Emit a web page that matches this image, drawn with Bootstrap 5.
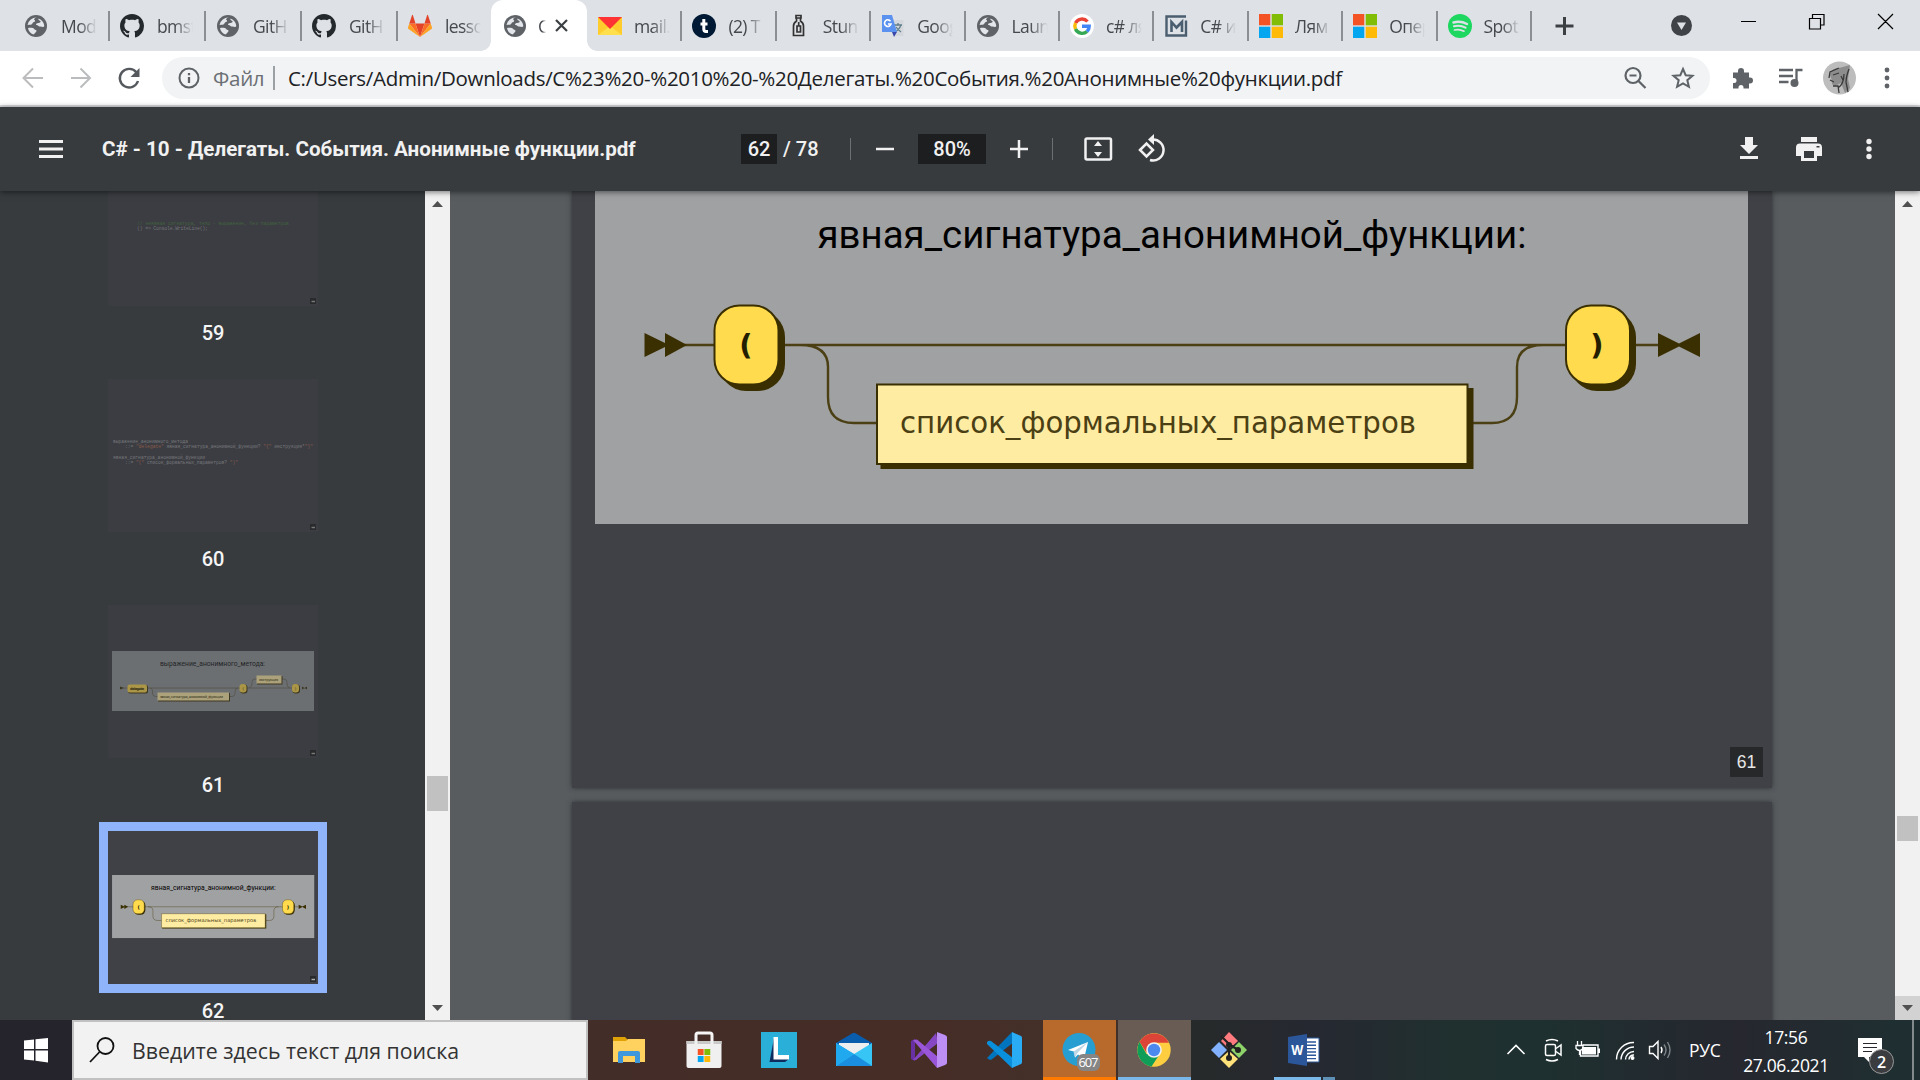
<!DOCTYPE html>
<html lang="ru">
<head>
<meta charset="utf-8">
<title>C# - 10 - Делегаты. События. Анонимные функции.pdf</title>
<link href="https://cdn.jsdelivr.net/npm/bootstrap@5.3.0/dist/css/bootstrap.min.css" rel="stylesheet">
<style>
body{width:1920px;height:1080px;overflow:hidden;font-family:"Open Sans","Noto Sans",sans-serif;color:#202124;line-height:1}
svg{display:block;overflow:visible}
.strip{height:51px;background:#dee1e6;padding-left:13px}
.tab{width:96px;height:51px;padding-left:11px;flex:none}
.tab.late{width:94.4px;padding-left:11px}
.fav{width:24px;height:24px;flex:none;margin-right:13px}
.late .fav{margin-right:12px}
.fav svg{width:24px;height:24px}
.tt{width:36px;overflow:hidden;white-space:nowrap;font-size:17.5px;line-height:26px;letter-spacing:-.6px;color:#45494d;-webkit-mask-image:linear-gradient(90deg,#000 50%,transparent);mask-image:linear-gradient(90deg,#000 50%,transparent)}
.tsep{width:2px;height:30px;background:#8b8e93;margin-left:auto;margin-right:-1px}
.tab.cur{background:#fff;border-radius:12px 12px 0 0;width:96px;margin-left:-2px;padding-left:12px;position:relative}
.cur .fav{margin-right:11px}
.cur .tt{width:8px}
.cur::before,.cur::after{content:"";position:absolute;bottom:0;width:10px;height:10px}
.cur::before{left:-10px;background:radial-gradient(circle at 0 0,transparent 9.5px,#fff 10px)}
.cur::after{right:-10px;background:radial-gradient(circle at 100% 0,transparent 9.5px,#fff 10px)}
.addr{height:56px;background:#fff;border-bottom:2px solid #dadce0;display:grid;grid-template-columns:57px 48px 57px 1548px 67px 48px 47px auto}
.pill{height:42px;border-radius:21px;background:#f1f3f4;padding-left:15px}
.url{font-size:20.5px;line-height:30px;white-space:nowrap;letter-spacing:-.3px}
.pdfbar{height:84px;background:#373b3e;color:#f1f1f1;font-family:Roboto,sans-serif;font-weight:500;font-size:20px;position:relative;z-index:3;box-shadow:0 1px 6px rgba(0,0,0,.55);display:grid;grid-template-columns:102px 639px 36px 73px 2px 66px 68px 66px 2px 60px 54px 560px 61px 60px auto}
.p-title{font-weight:700;font-size:20.6px}
.box{background:#1d1e20;height:30px;line-height:30px;text-align:center}
.vsep{height:22px;width:1px;background:#6d7072}
.work{height:829px;background:#585c5f}
.side{width:425px;background:#373b3e;overflow:hidden}
.side-in{margin-top:-38px;padding-left:108px}
.item{width:210px;height:226px}
.thumb{width:210px;height:153px;background:#3c3d42;overflow:hidden}
.item.on .thumb{background:#3f4146;outline:9px solid #8fb4f9;overflow:visible}
.num{font:500 20px/24px Roboto,sans-serif;color:#f5f5f5;text-align:center;padding-top:15px}
.sb{width:25px;background:#f1f1f1;flex:none}
.sbb{height:25px}
.knob{width:21px;background:#c1c1c1;margin:0 auto}
.view{width:1445px;overflow:hidden;padding-left:122px}
.sheet{width:1200px;background:#3f4146;box-shadow:0 0 5px 0 #303335}
.pg{width:33px;height:30px;background:#27282a;color:#e6e6e6;font:17.5px/30px "Liberation Sans",sans-serif;text-align:center}
.task{height:60px;color:#fff;background:linear-gradient(90deg,#25242d 0,#25242d 80px,#432d28 590px,#462d26 900px,#43302a 1110px,#272a2a 1195px,#262831 1310px,#20302f 1450px,#1e3030 1540px,#26272f 1740px,#1f2f31 1900px)}
.find{width:516px;height:60px;background:#f2f2f2;border:2px solid #c1c1c1;color:#333;padding-left:15px}
.find span{font-size:21.3px;line-height:30px;white-space:nowrap;padding-top:2px}
.app{width:75px;height:60px;flex:none;position:relative;padding:0 1px}
.app svg{width:36px;height:36px;margin:12px auto 0}
.app.att::before,.app.act::before{content:"";position:absolute;inset:0 1px;background:#b8692c}
.app.act::before{background:#685c55}
.app.att svg,.app.act svg{position:relative}
.bar{position:absolute;left:1px;right:1px;bottom:0;height:3px;background:#ff7a00}
.bar.blue{background:#7ab8ea}
.tray{width:413px;display:grid;grid-template-columns:38px 31px 39px 33px 41px 52px 90px auto}
.clock{font-size:17.5px;line-height:28px;text-align:center;letter-spacing:-.35px}
</style>
</head>
<body>
<svg width="0" height="0" class="position-absolute">
<defs>
<symbol id="globe" viewBox="0 0 24 24"><circle cx="12" cy="12" r="11" fill="#5f6368"/><path d="M13 3.5c-3 .5-3.500 2-2 3 .6 1-1 1.500-2 2-.8 1.500-1.500 2.500-4 2.300L3.500 11A9 9 0 0 1 13 3.500zM14.500 4.500c3.500 1.500 5.500 4 5.800 7.500-1 2-2.500.5-4 .5-2.500 0-1.800-1.500-4-1.500-1-1 .5-2 2-2 1.800-.3 3-1 2-2s-2.500-1-1.800-2.500zM4 14c2.500-.5 5-.5 6 .8.500 1.200 3 1 2.500 2.500-1 1.200-1.500 2.200-3.200 3.200C6.500 19.500 4.500 17 4 14z" fill="#e3e6ea"/></symbol>
<symbol id="gh" viewBox="0 0 16 16"><path fill="#24292e" d="M8 0C3.580 0 0 3.580 0 8c0 3.540 2.290 6.530 5.470 7.590.4.070.55-.17.55-.38 0-.19-.01-.82-.01-1.490-2.010.37-2.530-.49-2.690-.94-.09-.23-.48-.94-.82-1.130-.28-.15-.68-.52-.01-.53.63-.01 1.080.58 1.230.82.720 1.210 1.870.87 2.330.66.070-.52.28-.87.510-1.070-1.780-.2-3.640-.89-3.640-3.950 0-.87.31-1.590.82-2.150-.08-.2-.36-1.020.08-2.120 0 0 .67-.21 2.200.82.64-.18 1.320-.27 2-.27s1.360.09 2 .27c1.530-1.040 2.200-.82 2.200-.82.44 1.100.16 1.920.08 2.120.51.560.82 1.270.82 2.150 0 3.070-1.870 3.750-3.650 3.950.29.25.54.730.54 1.480 0 1.070-.01 1.930-.01 2.200 0 .21.150.46.550.38A8.010 8.010 0 0 0 16 8c0-4.420-3.580-8-8-8z"/></symbol>
<symbol id="win" viewBox="0 0 24 24"><path fill="#f35325" d="M0 0h11.300v11.300H0z"/><path fill="#81bc06" d="M12.700 0H24v11.300H12.700z"/><path fill="#05a6f0" d="M0 12.700h11.300V24H0z"/><path fill="#ffba08" d="M12.700 12.700H24V24H12.700z"/></symbol>
<symbol id="rail" viewBox="595 164 1153 360">
<path fill="#a0a1a3" d="M595 164h1153v360H595z"/>
<text x="817.5" y="248" font-family="Roboto,sans-serif" font-size="39" textLength="709" lengthAdjust="spacingAndGlyphs" fill="#000">явная_сигнатура_анонимной_функции:</text>
<g fill="none" stroke="#4b3f14" stroke-width="2.400"><path d="M680 345h40M780 345h785M1632 345h30M800 345q28 0 28 22v30q0 26 26 26h24M1468 423h24q25 0 25-26v-30q0-22 26-22"/></g>
<path fill="#3a2f00" d="M644.500 333l20.500 10v-10l22 12-22 12v-10l-20.500 10zM1658 333l21 10.500 21-10.500v24l-21-10.500-21 10.500z"/>
<g fill="#3a2f00"><path d="M880.500 388h593v81h-593z"/><rect x="719" y="310" width="66" height="81" rx="27"/><rect x="1570" y="310" width="66" height="81" rx="27"/></g>
<g stroke="#3a2f00" stroke-width="2"><path fill="#ffeca3" d="M877 384.500h590.500v79.500H877z"/><rect x="714.500" y="305.500" width="64" height="79" rx="25" fill="#ffdb4d"/><rect x="1566" y="305.500" width="64" height="79" rx="25" fill="#ffdb4d"/></g>
<text x="900" y="432.500" font-family="'DejaVu Sans',sans-serif" font-size="29.500" textLength="516" lengthAdjust="spacingAndGlyphs" fill="#4b4014">список_формальных_параметров</text>
<g font-family="'DejaVu Sans',sans-serif" font-weight="bold" font-size="29" fill="#241e00" text-anchor="middle"><text x="746" y="355">(</text><text x="1597" y="355">)</text></g>
</symbol>
</defs>
</svg>

<div class="strip d-flex align-items-center">
<div class="tab d-flex align-items-center"><div class="fav"><svg><use href="#globe"/></svg></div><div class="tt">Mod</div><i class="tsep"></i></div>
<div class="tab d-flex align-items-center"><div class="fav"><svg><use href="#gh"/></svg></div><div class="tt">bmst</div><i class="tsep"></i></div>
<div class="tab d-flex align-items-center"><div class="fav"><svg><use href="#globe"/></svg></div><div class="tt">GitH</div><i class="tsep"></i></div>
<div class="tab d-flex align-items-center"><div class="fav"><svg><use href="#gh"/></svg></div><div class="tt">GitH</div><i class="tsep"></i></div>
<div class="tab d-flex align-items-center"><div class="fav"><svg viewBox="0 0 24 24"><path fill="#e24329" d="M12 23L7.500 9.500h9z"/><path fill="#fc6d26" d="M12 23L1.300 9.500h6.200zM12 23L22.700 9.500h-6.200z"/><path fill="#fca326" d="M1.300 9.500L0 13.500q-.2 1 .5 1.500L12 23zM22.700 9.500l1.300 4q.2 1-.5 1.500L12 23z"/><path fill="#e24329" d="M1.300 9.500h6.200L4.900 1.200q-.4-.8-.9 0zM22.700 9.500h-6.200l2.600-8.300q.4-.8.9 0z"/></svg></div><div class="tt">lesso</div></div>
<div class="tab cur d-flex align-items-center"><div class="fav"><svg><use href="#globe"/></svg></div><div class="tt">C</div><svg class="ms-2" width="15" height="15" viewBox="0 0 15 15"><path d="M2 2l11 11M13 2L2 13" stroke="#3c4043" stroke-width="2.200"/></svg></div>
<div class="tab late d-flex align-items-center"><div class="fav"><svg viewBox="0 0 24 24"><path fill="#ffcc2e" d="M0 3h24v18H0z"/><path fill="#ffdf4b" d="M0 21l12-9 12 9z"/><path fill="#f33" d="M0 3h24L12 15z"/></svg></div><div class="tt">mail.</div><i class="tsep"></i></div>
<div class="tab late d-flex align-items-center"><div class="fav"><svg viewBox="0 0 24 24"><circle cx="12" cy="12" r="12" fill="#001935"/><path d="M11.800 5v10q0 2.500 2.200 2.500h2M8.500 10h7" stroke="#fff" stroke-width="3" fill="none"/></svg></div><div class="tt">(2) T</div><i class="tsep"></i></div>
<div class="tab late d-flex align-items-center"><div class="fav"><svg viewBox="0 0 24 24" fill="none" stroke="#333" stroke-width="1.700"><path d="M9 1.500h5v2.500H9zM9.500 4v3Q6.500 9 6.500 12v9.500h10V12q0-3-3-5V4M10 12v6h3.500v-6zM11.700 8v4"/></svg></div><div class="tt">Stun</div><i class="tsep"></i></div>
<div class="tab late d-flex align-items-center"><div class="fav"><svg viewBox="0 0 24 24"><path fill="#d4d8dc" d="M10 6h12.500v16H13z"/><path stroke="#607d8b" stroke-width="1.300" fill="none" d="M13 11h8M17 9v2M20 11q-2 5-6 7M15 13q2 3 5 5"/><path fill="#5b92f0" d="M1 1h10l5 17H1z"/><path fill="#3949ab" d="M11 18h5l-3 5z"/><path d="M9.500 7.200A3.300 3.300 0 1 0 10 10H7" fill="none" stroke="#fff" stroke-width="1.600"/></svg></div><div class="tt">Goog</div><i class="tsep"></i></div>
<div class="tab late d-flex align-items-center"><div class="fav"><svg><use href="#globe"/></svg></div><div class="tt">Laun</div><i class="tsep"></i></div>
<div class="tab late d-flex align-items-center"><div class="fav"><svg viewBox="0 0 24 24" fill="none" stroke-width="3.400"><circle cx="12" cy="12" r="12" fill="#fff"/><path stroke="#ea4335" d="M17.500 7.500A7.300 7.300 0 0 0 5.500 9"/><path stroke="#fbbc05" d="M5.500 9a7.300 7.300 0 0 0 0 6"/><path stroke="#34a853" d="M5.500 15a7.300 7.300 0 0 0 11.500 2.500"/><path stroke="#4285f4" d="M17 17.500q2.200-2 2.200-5.200H12"/></svg></div><div class="tt">c# ля</div><i class="tsep"></i></div>
<div class="tab late d-flex align-items-center"><div class="fav"><svg viewBox="0 0 24 24" fill="none" stroke="#4b5e6f"><path stroke-width="2.400" d="M22 6.500v15H2.500v-19H22"/><path stroke-width="2.600" d="M7.500 18V8l5 5.500L18 8v10"/></svg></div><div class="tt">C# и</div><i class="tsep"></i></div>
<div class="tab late d-flex align-items-center"><div class="fav"><svg><use href="#win"/></svg></div><div class="tt">Лям</div><i class="tsep"></i></div>
<div class="tab late d-flex align-items-center"><div class="fav"><svg><use href="#win"/></svg></div><div class="tt">Опер</div><i class="tsep"></i></div>
<div class="tab late d-flex align-items-center"><div class="fav"><svg viewBox="0 0 24 24" fill="none" stroke="#dee1e6" stroke-linecap="round"><circle cx="12" cy="12" r="12" fill="#1ed760" stroke="none"/><path stroke-width="2.500" d="M5.500 8.500q7-2 13.500 1.500"/><path stroke-width="2.100" d="M6 12.300q6-1.700 11.500 1.400"/><path stroke-width="1.700" d="M6.500 16q5-1.200 9.500 1.200"/></svg></div><div class="tt">Spot</div><i class="tsep"></i></div>
<svg width="364" height="51" viewBox="1531 0 364 51"><path d="M1555.500 26h18M1564.500 17v18" stroke="#3c4043" stroke-width="3"/><circle cx="1681.500" cy="25.500" r="10.500" fill="#3f4347"/><path d="M1677 22.500h9l-4.500 7.500z" fill="#dee1e6"/><path d="M1741 21.500h15M1809.500 18.500h11v10.500h-11zM1812.500 18v-3.500h11.500v10.500h-3.500M1878 14l15 15M1893 14l-15 15" stroke="#000" fill="none" stroke-width="1.200"/></svg>
</div>

<div class="addr align-items-center">
<svg width="57" height="54" viewBox="0 51 57 54"><path d="M43 78H25M33 68.500L23.500 78l9.500 9.500" stroke="#babcbe" stroke-width="2" fill="none"/></svg>
<svg width="48" height="54" viewBox="57 51 48 54"><path d="M71 78h18M80.500 68.500L90 78l-9.500 9.500" stroke="#babcbe" stroke-width="2" fill="none"/></svg>
<svg width="57" height="54" viewBox="105 51 57 54"><path d="M136.500 72.500A9.300 9.300 0 1 0 138 81" stroke="#55595e" stroke-width="2.400" fill="none"/><path d="M139.500 68v9h-9z" fill="#55595e"/></svg>
<div class="pill d-flex align-items-center">
<svg width="24" height="24" viewBox="0 0 24 24" fill="none" stroke="#5f6368" stroke-width="2"><circle cx="12" cy="12" r="9.500"/><path stroke-width="2.300" d="M12 11v6M12 7v2.300"/></svg>
<span class="url" style="color:#6b6f74;margin-left:12px;width:60px">Файл</span><i style="width:2px;height:24px;background:#9c9fa3"></i>
<span class="url" style="margin-left:13px;width:1337px">C:/Users/Admin/Downloads/C%23%20-%2010%20-%20Делегаты.%20События.%20Анонимные%20функции.pdf</span>
<svg width="72" height="24" viewBox="1625 66 72 24" fill="none" stroke="#5f6368" stroke-width="2.200"><circle cx="1633" cy="75.500" r="7.500"/><path d="M1638.500 81l7 7M1629.500 75.500h7"/><path stroke-width="2" d="M1683 69l2.700 6.200 6.800.6-5.200 4.400 1.600 6.600-5.900-3.500-5.900 3.500 1.600-6.600-5.200-4.400 6.800-.6z"/></svg>
</div>
<svg width="67" height="54" viewBox="1711 51 67 54"><path fill="#5f6368" d="M1734 72.500h5v-1.500a3 3 0 0 1 6 0v1.500h5v5h1a3 3 0 0 1 0 6h-1v5h-5.500v-1a2.500 2.500 0 0 0-5 0v1H1734v-5.500h1a2.500 2.500 0 0 0 0-5h-1z"/></svg>
<svg width="48" height="54" viewBox="1777 51 48 54"><path d="M1779 70h14M1779 76h14M1779 82h9.500M1796.500 83V70h6" stroke="#5f6368" stroke-width="2.300" fill="none"/><circle cx="1794.500" cy="83" r="4" fill="#5f6368"/></svg>
<svg width="47" height="54" viewBox="1825 51 47 54"><circle cx="1839.500" cy="78" r="16.500" fill="#bdbdbd"/><path d="M1830 75q1-7 9-7l11-3-2 14 2 9-5 5-4-10-6 3q-4-1-3-5z" fill="#8d8d8d"/><path d="M1829 78l1-6 9-4M1833 75l6-2M1838 88q6-4 6-14M1849 69q-3 8-3 13M1833 86h5l1 7M1846 82l2 10M1830 80l4 2M1841 76l2 4" stroke="#3a3a3a" stroke-width="1.300" fill="none"/></svg>
<svg width="48" height="54" viewBox="1872 51 48 54" fill="#5f6368"><circle cx="1887" cy="70" r="2.400"/><circle cx="1887" cy="78" r="2.400"/><circle cx="1887" cy="86" r="2.400"/></svg>
</div>

<div class="pdfbar align-items-center">
<svg width="102" height="24" viewBox="0 137 102 24"><path d="M39 141.500h24M39 149h24M39 156.500h24" stroke="#f1f1f1" stroke-width="3"/></svg>
<span class="p-title">C# - 10 - Делегаты. События. Анонимные функции.pdf</span>
<div class="box">62</div><span style="padding-left:6px">/&nbsp;78</span><i class="vsep"></i>
<svg width="66" height="24" viewBox="0 0 66 24"><path d="M24 12h18" stroke="#f1f1f1" stroke-width="2.500"/></svg>
<div class="box">80%</div>
<svg width="66" height="24" viewBox="0 0 66 24"><path d="M24 12h18M33 3v18" stroke="#f1f1f1" stroke-width="2.500"/></svg><i class="vsep"></i>
<svg width="60" height="28" viewBox="1054 135 60 28"><rect x="1085.500" y="138.500" width="25.500" height="21" rx="1.500" fill="none" stroke="#f1f1f1" stroke-width="2.500"/><path fill="#f1f1f1" d="M1098 141l4 5h-8zM1098 157l4-5h-8z"/></svg>
<svg width="54" height="30" viewBox="1114 134 54 30"><g fill="none" stroke="#f1f1f1" stroke-width="2.500"><path d="M1140 150l6.500-6.500 6.500 6.500-6.500 6.500zM1152 139.500a10.500 10.500 0 1 1-2 20.500"/></g><path fill="#f1f1f1" d="M1154 134v11l-6-5.500z"/></svg>
<span></span>
<svg width="61" height="26" viewBox="1728 136 61 26"><path fill="#f1f1f1" d="M1745 137h8v8h5l-9 9-9-9h5zM1740 156h18v3h-18z"/></svg>
<svg width="60" height="26" viewBox="1789 136 60 26"><path fill="#f1f1f1" fill-rule="evenodd" d="M1801 137h16v5h-16zM1800 143.500h18q4 0 4 4v8.500h-5v5h-16v-5h-5v-8.500q0-4 4-4zM1804 151v7h10v-7zM1816.500 147.500h3v-1.500h-3z"/></svg>
<svg width="60" height="26" viewBox="1849 136 60 26" fill="#f1f1f1"><circle cx="1869" cy="141.500" r="2.700"/><circle cx="1869" cy="149" r="2.700"/><circle cx="1869" cy="156.500" r="2.700"/></svg>
</div>

<div class="work d-flex">
<div class="side flex-shrink-0"><div class="side-in">
<div class="item"><div class="thumb"><svg width="210" height="153" font-family="Liberation Mono,monospace" font-size="4.800"><text x="29" y="72" fill="#40623f" textLength="152">//  неявная сигнатура, тело - выражение, без параметров</text><text x="29" y="77" fill="#717377" textLength="71">() =&gt; Console.WriteLine();</text><path d="M202 145h6v6h-6z" fill="#292a2c"/><path d="M203.500 148.500h3.500" stroke="#777" stroke-width="1.500"/></svg></div><div class="num">59</div></div>
<div class="item"><div class="thumb"><svg width="210" height="153" font-family="Liberation Mono,monospace" font-size="4.600" fill="#76787c"><text x="5" y="63.500" textLength="75">выражение_анонимного_метода</text><text x="17" y="69" textLength="188">::= <tspan fill="#8a5c4b">"delegate"</tspan> явная_сигнатура_анонимной_функции? <tspan fill="#8a5c4b">"{"</tspan> инструкция*<tspan fill="#8a5c4b">"}"</tspan></text><text x="5" y="79.500" textLength="92">явная_сигнатура_анонимной_функции</text><text x="17" y="85" textLength="113">::= <tspan fill="#8a5c4b">"("</tspan> список_формальных_параметров? <tspan fill="#8a5c4b">")"</tspan></text><path d="M202 145h6v6h-6z" fill="#292a2c"/><path d="M203.500 148.500h3.500" stroke="#777" stroke-width="1.500"/></svg></div><div class="num">60</div></div>
<div class="item"><div class="thumb"><svg width="210" height="153"><path fill="#6c6f72" d="M4 46h202v60H4z"/><text x="52" y="60.500" font-family="Roboto,sans-serif" font-size="6.800" textLength="105" lengthAdjust="spacingAndGlyphs" fill="#232527">выражение_анонимного_метода:</text><g fill="none" stroke="#56534a" stroke-width=".8"><path d="M12 83h180M42 83q2.500 0 2.500 3v2q0 3.500 3 3.500h3M121 91.500h3q3 0 3-3v-2q0-3.500 3-3.500M141 83q3-1 3-4v-1.500q0-3.500 3-3.500h3M173 74h3q3 0 3 3.500V79q0 3 3 4"/></g><path fill="#3c3720" d="M12 81.500l4 1.500-4 1.500zM194 81.500l5 3v-3l-5 3z"/><g fill="#3c3720"><rect x="20" y="80" width="20" height="8.500" rx="2"/><path d="M50 88h72v8.500H50zM149 71h25.500v8.500H149z"/><rect x="132" y="79.500" width="7.500" height="9" rx="3"/><rect x="184.500" y="79.500" width="7.500" height="9" rx="3"/></g><g fill="#aa9646"><rect x="19.500" y="79.500" width="19.500" height="8" rx="2"/><rect x="131.500" y="79" width="7" height="8.500" rx="3"/><rect x="184" y="79" width="7" height="8.500" rx="3"/></g><path fill="#aba27b" d="M49.500 87.500h71.500v8H49.500zM148.500 70.500h25v8h-25z"/><g font-family="DejaVu Sans,sans-serif" font-size="3.500" fill="#343018"><text x="22" y="84.500" font-weight="bold" textLength="14">delegate</text><text x="52" y="92.500" textLength="63">явная_сигнатура_анонимной_функции</text><text x="151" y="75.500" textLength="19">инструкция</text><text x="134" y="84.500">{</text><text x="186.500" y="84.500">}</text></g><path d="M202 145h6v6h-6z" fill="#292a2c"/><path d="M203.500 148.500h3.500" stroke="#777" stroke-width="1.500"/></svg></div><div class="num">61</div></div>
<div class="item on"><div class="thumb"><svg width="210" height="153"><use href="#rail" x="4" y="44" width="202.500" height="63.200"/><path d="M202 145h6v6h-6z" fill="#292a2c"/><path d="M203.500 148.500h3.500" stroke="#aaa" stroke-width="1.500"/></svg></div><div class="num">62</div></div>
</div></div>
<div class="sb d-flex flex-column">
<svg class="sbb" width="25" height="25"><path d="M7 16h11l-5.500-6z" fill="#505050"/></svg>
<div style="height:560px"></div><div class="knob" style="height:35px"></div>
<svg class="sbb mt-auto" width="25" height="25"><path d="M7 10h11l-5.500 6z" fill="#505050"/></svg>
</div>
<div class="view flex-shrink-0">
<div class="sheet" style="height:597px;padding-left:23px"><svg width="1153" height="333" viewBox="595 191 1153 333"><svg x="595" y="191" width="1153" height="333" viewBox="595 191 1153 333" style="overflow:hidden"><use href="#rail" x="595" y="164" width="1153" height="360"/></svg></svg><div class="pg" style="margin-left:1135px;margin-top:223px">61</div></div>
<div class="sheet" style="height:300px;margin-top:14px"></div>
</div>
<div class="sb d-flex flex-column">
<svg class="sbb" width="25" height="25"><path d="M7 16h11l-5.500-6z" fill="#505050"/></svg>
<div style="height:600px"></div><div class="knob" style="height:25px"></div>
<div class="mt-auto" style="background:#d2d2d2"><svg width="25" height="24"><path d="M7 9h11l-5.500 6z" fill="#505050"/></svg></div>
</div>
</div>

<div class="task d-flex">
<svg width="72" height="60"><path fill="#fff" d="M24 20.500L34 19.500v9.500H24zM35.500 19.300L48 18v11H35.500zM24 30.500h10v10L24 39.500zM35.500 30.500H48V42.500l-12.500-1.800z"/></svg>
<div class="find d-flex align-items-center"><svg width="43" height="30" viewBox="0 0 43 30" fill="none" stroke="#111" stroke-width="1.800"><circle cx="16.500" cy="11" r="8"/><path d="M10.500 17L1 27"/></svg><span>Введите здесь текст для поиска</span></div>
<div class="d-flex" style="padding-left:3.500px">
<div class="app"><svg viewBox="0 0 36 36"><path fill="#e0a106" d="M2 5h12l3 3v4H2z"/><path fill="#ffd25f" d="M2 9h13l2-2h17v23H2z"/><path fill="#3f97dc" d="M7 31V21q0-2 2-2h18q2 0 2 2v10h-5v-7H12v7z"/></svg></div>
<div class="app"><svg viewBox="0 0 36 36"><path d="M10 12V3q0-2 2-2h12q2 0 2 2v9" fill="none" stroke="#f5f5f5" stroke-width="3"/><path fill="#f0f0f0" d="M.5 9h35v25q0 2-2 2h-31q-2 0-2-2z"/><path fill="#c9c9c9" d="M.5 9h8v3h-8zM11.500 9h13v3h-13zM27.500 9h8v3h-8z"/><use href="#win" x="11.500" y="17" width="13" height="13"/></svg></div>
<div class="app"><svg viewBox="0 0 36 36"><path fill="#2aafd9" d="M0 0h36v36H0z"/><path fill="#0f2c5e" d="M13 6L8.500 30H24l4-3-14-1z"/><path fill="#fff" d="M12.500 5H17v18h11v4.500H12.500z"/></svg></div>
<div class="app"><svg viewBox="0 0 36 36"><path fill="#0a5cad" d="M0 11L16 1.500q2-1.500 4 0L36 11v4H0z"/><path fill="#eee" d="M3 11h30v10L18 27 3 20z"/><path fill="#37c5f5" d="M36 11v23H0V11l18 11z"/><path fill="#1a8fe0" d="M0 34l18-12 18 12z"/><path fill="#20a9ee" d="M0 11l18 11L0 34z"/></svg></div>
<div class="app"><svg viewBox="0 0 36 36"><path fill="#6830a2" d="M0 9l4-2v22l-4-2z"/><path fill="#8747c5" d="M2 28L25 1l2 10L5 28z"/><path fill="#9a56d8" d="M2 8l4-.5L27 25l-1 11z"/><path fill="#bd8ff5" d="M26 0l8 3q2 1 2 2v26q0 1-2 2l-8 3z"/></svg></div>
<div class="app"><svg viewBox="0 0 36 36"><path fill="#0075bd" d="M1 26L26 0l2 10L5 28q-2 0-4-2z"/><path fill="#0a8fdc" d="M1 10q2-2 4-1l22 17-1 10L1 12z"/><path fill="#2aacf5" d="M26 0l9 4q1 .5 1 2v24q0 1.500-1 2l-9 4z"/></svg></div>
<div class="app att"><svg viewBox="0 0 36 36"><circle cx="18" cy="17.500" r="16.500" fill="#279ed2"/><path fill="#fff" d="M7 18l20-8-4 17-6-4.500-3 3-1-6z"/><path fill="#bdd6e6" d="M12.500 19.500L27 10 16 21.500l-2 4z"/><rect x="16" y="22" width="23" height="17" rx="6" fill="#858585"/><text x="27.500" y="35" font-size="13" text-anchor="middle" fill="#fff" font-family="Open Sans,sans-serif" textLength="20">607</text></svg><i class="bar"></i></div>
<div class="app act"><svg viewBox="0 0 36 36"><circle cx="18" cy="18" r="16.700" fill="#ffcd40"/><path fill="#db4437" d="M3.500 9.700a16.700 16.700 0 0 1 29.400 1H18l-7.500 10z"/><path fill="#0f9d58" d="M3.500 9.700a16.700 16.700 0 0 0 12 24.800L22.500 24l-12-2z"/><circle cx="18" cy="18" r="7.800" fill="#f1f1f1"/><circle cx="18" cy="18" r="6.200" fill="#4b89ef"/></svg><i class="bar blue"></i></div>
<div class="app"><svg viewBox="0 0 36 36"><path fill="#ff7b80" d="M18 0l9 9-9 8-8-8z"/><path fill="#82b1ff" d="M0 18l8-8 8 8-8 8z"/><path fill="#8ed36a" d="M28 10l8 8-8 8-8-8z"/><path fill="#ffe27a" d="M18 19l9 8-9 9-9-9z"/><path d="M10 4l8 8v14M18 12l9 6" stroke="#222" stroke-width="2.200" fill="none"/><g fill="#222"><circle cx="18" cy="13" r="3"/><circle cx="27" cy="18" r="3"/><circle cx="18" cy="26" r="3"/></g></svg></div>
<div class="app"><svg viewBox="0 0 36 36"><path fill="#fff" stroke="#2b579a" d="M18 6h15v24H18z"/><path stroke="#2b579a" stroke-width="1.400" d="M19 10h11M19 13.300h11M19 16.600h11M19 20h11M19 23.300h11M19 26.600h11"/><path fill="#2b579a" d="M2 5l19-3v32L2 31z"/><text x="11.200" y="23" font-size="15" font-weight="bold" text-anchor="middle" fill="#fff" font-family="Open Sans,sans-serif" textLength="12" lengthAdjust="spacingAndGlyphs">W</text></svg><i class="bar blue" style="left:7px;right:21px"></i><i class="bar" style="left:56px;right:7px;background:#5e90b8"></i></div>
</div>
<div class="tray ms-auto">
<svg width="38" height="60" viewBox="1507 0 38 60"><path d="M1507.500 34l8.500-8.500 8.500 8.500" stroke="#fff" fill="none" stroke-width="1.600"/></svg>
<svg width="31" height="60" viewBox="1545 0 31 60" fill="none" stroke="#fff" stroke-width="1.500"><rect x="1545.500" y="24.500" width="10" height="11" rx="1.500"/><path d="M1556 28.500l5-3.500v10l-5-3.500M1546 21q6-3 12 0M1546 39.500q6 3 12 0"/></svg>
<svg width="39" height="60" viewBox="1576 0 39 60"><path d="M1582.500 25h15.500v11h-17.500v-5" stroke="#fff" fill="none" stroke-width="1.400"/><path fill="#fff" d="M1582 27h14v7.500h-14zM1598 28.500h2v4.500h-2z"/><path d="M1577.500 21v4M1581.500 21v4M1576 25.500h7v3q-3.500 4-7 0zM1579.500 30v5" stroke="#fff" stroke-width="1.300" fill="none"/></svg>
<svg width="33" height="60" viewBox="1615 0 33 60" fill="none" stroke="#fff" stroke-width="1.400"><path d="M1616.500 39.500a17 17 0 0 1 17.500-17M1621 39.500a13 13 0 0 1 13-12.500M1625.500 39.500a8.500 8.500 0 0 1 8.500-8M1629 39.500a4.500 4.500 0 0 1 5-4.500"/><circle cx="1632.500" cy="38" r="1.300" fill="#fff"/></svg>
<svg width="41" height="60" viewBox="1648 0 41 60" fill="none" stroke="#fff" stroke-width="1.400"><path d="M1649.500 26.500h3.500l5-5v17l-5-5h-3.500zM1661 27q2 3 0 6"/><path stroke="#7d8788" d="M1664 24.500q4 5.500 0 11M1667.500 22q5 8 0 16"/></svg>
<span class="clock text-start" style="line-height:61px">РУС</span>
<div class="clock" style="padding-top:3px">17:56<br>27.06.2021</div>
<svg width="89" height="60" viewBox="1831 0 89 60"><path fill="#fff" d="M1858 18h24v19h-13v5l-5-5h-6z"/><path d="M1863 23.500h14M1863 27.500h14M1863 31.500h9" stroke="#26282e" stroke-width="1.200"/><circle cx="1881.500" cy="41.500" r="12" fill="#3a3c3f" stroke="#999"/><text x="1881.500" y="47.500" font-size="16" font-weight="600" text-anchor="middle" fill="#fff" font-family="Open Sans,sans-serif">2</text><path d="M1913 0v60" stroke="#838a8b" stroke-width="2"/></svg>
</div>
</div>
<script src="https://cdn.jsdelivr.net/npm/bootstrap@5.3.0/dist/js/bootstrap.bundle.min.js"></script>
</body>
</html>
